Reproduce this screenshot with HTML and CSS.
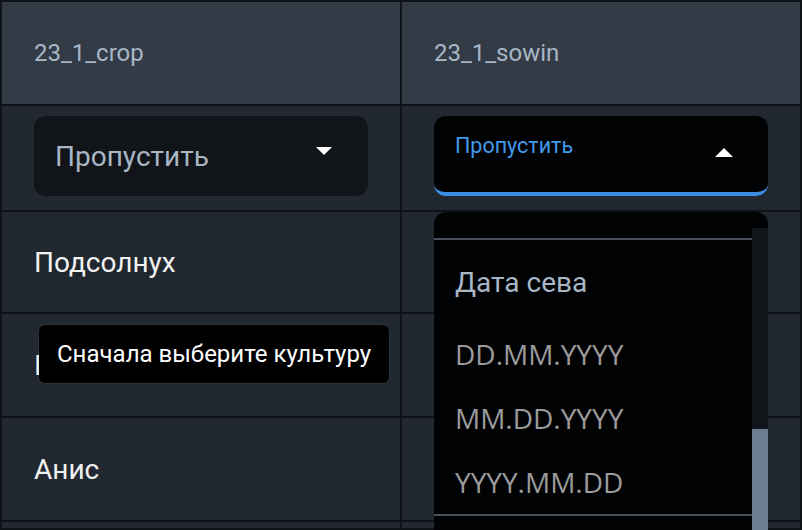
FILE: index.html
```html
<!DOCTYPE html>
<html lang="ru">
<head>
<meta charset="utf-8">
<title>Table</title>
<link rel="stylesheet" href="styles.css">
</head>
<body>
<div class="table">
  <div class="cell head">23_1_crop</div>
  <div class="cell head">23_1_sowin</div>

  <div class="cell sel-cell">
    <div class="select">
      <span class="select-text">Пропустить</span>
      <span class="caret down"></span>
    </div>
  </div>
  <div class="cell sel-cell">
    <div class="select open">
      <span class="select-label">Пропустить</span>
      <span class="caret up"></span>
    </div>
  </div>

  <div class="cell name">Подсолнух</div>
  <div class="cell"></div>

  <div class="cell name">Пшеница</div>
  <div class="cell"></div>

  <div class="cell name">Анис</div>
  <div class="cell"></div>

  <div class="cell"></div>
  <div class="cell"></div>
</div>

<div class="tooltip">Сначала выберите культуру</div>

<div class="menu">
  <div class="menu-list">
    <div class="menu-divider"></div>
    <div class="menu-group">Дата сева</div>
    <div class="menu-item">DD.MM.YYYY</div>
    <div class="menu-item">MM.DD.YYYY</div>
    <div class="menu-item">YYYY.MM.DD</div>
    <div class="menu-divider"></div>
  </div>
  <div class="scrollbar"><div class="thumb"></div></div>
</div>
</body>
</html>
```

FILE: styles.css
```css
html, body {
  margin: 0;
  padding: 0;
}
body {
  width: 802px;
  height: 530px;
  overflow: hidden;
  background: #0f1318;
  font-family: Roboto, "Noto Sans", Arial, sans-serif;
  position: relative;
}
.table {
  display: grid;
  grid-template-columns: 398px 398px;
  grid-template-rows: 102px 104px 100px 102px 102px 6px;
  gap: 2px;
  padding: 2px 2px 0 2px;
  background: #0f1318;
}
.cell {
  background: #212830;
  box-sizing: border-box;
  padding-left: 32px;
  display: flex;
  align-items: center;
  color: #f2f2f2;
  font-size: 28px;
  overflow: hidden;
}
.cell.head {
  background: #333b47;
  color: #a8b6c6;
  font-size: 24px;
}
.cell.sel-cell {
  align-items: flex-start;
  padding-top: 10px;
}
.select {
  width: 334px;
  height: 80px;
  box-sizing: border-box;
  border-radius: 12px;
  background: #111418;
  display: flex;
  align-items: center;
  justify-content: space-between;
  padding: 0 36px 0 21px;
}
.select-text {
  color: #a8b6c6;
  font-size: 28px;
}
.caret {
  width: 0;
  height: 0;
  border-left: 8px solid transparent;
  border-right: 8px solid transparent;
}
.caret.down {
  border-top: 8px solid #ffffff;
  margin-bottom: 10px;
}
.select.open {
  background: #010203;
  border-bottom: 4px solid #3b8de6;
  align-items: flex-start;
  padding-top: 17px;
  padding-right: 35px;
}
.select-label {
  color: #4399ea;
  font-size: 21.5px;
}
.caret.up {
  border-bottom: 9px solid #ffffff;
  border-left-width: 9px;
  border-right-width: 9px;
  margin-top: 15px;
}
.tooltip {
  position: absolute;
  left: 39px;
  top: 325px;
  width: 350px;
  height: 58px;
  box-sizing: border-box;
  background: #000000;
  border-radius: 6px;
  box-shadow: 0 0 0 1px rgba(255, 255, 255, 0.05);
  color: #ffffff;
  font-size: 24px;
  display: flex;
  align-items: center;
  padding-left: 18px;
}
.menu {
  position: absolute;
  left: 434px;
  top: 212px;
  width: 334px;
  height: 318px;
  background: #010203;
  border-radius: 12px 12px 0 0;
  display: flex;
  overflow: hidden;
}
.menu-list {
  flex: 1;
  padding-top: 26px;
}
.menu-divider {
  height: 2px;
  background: #474f5b;
  margin-left: -1px;
}
.menu-group {
  height: 82px;
  box-sizing: border-box;
  padding: 2px 0 0 21px;
  display: flex;
  align-items: center;
  color: #a8b6c6;
  font-size: 28px;
}
.menu-item {
  height: 64px;
  display: flex;
  align-items: center;
  padding-left: 21px;
  color: #9b9b9b;
  font-family: "Open Sans", "Noto Sans", sans-serif;
  font-size: 28px;
}
.scrollbar {
  width: 16px;
  margin-top: 16px;
  background: #121519;
  display: flex;
  flex-direction: column;
}
.thumb {
  margin-top: 201px;
  flex: 1;
  background: #6d7e92;
}
```
